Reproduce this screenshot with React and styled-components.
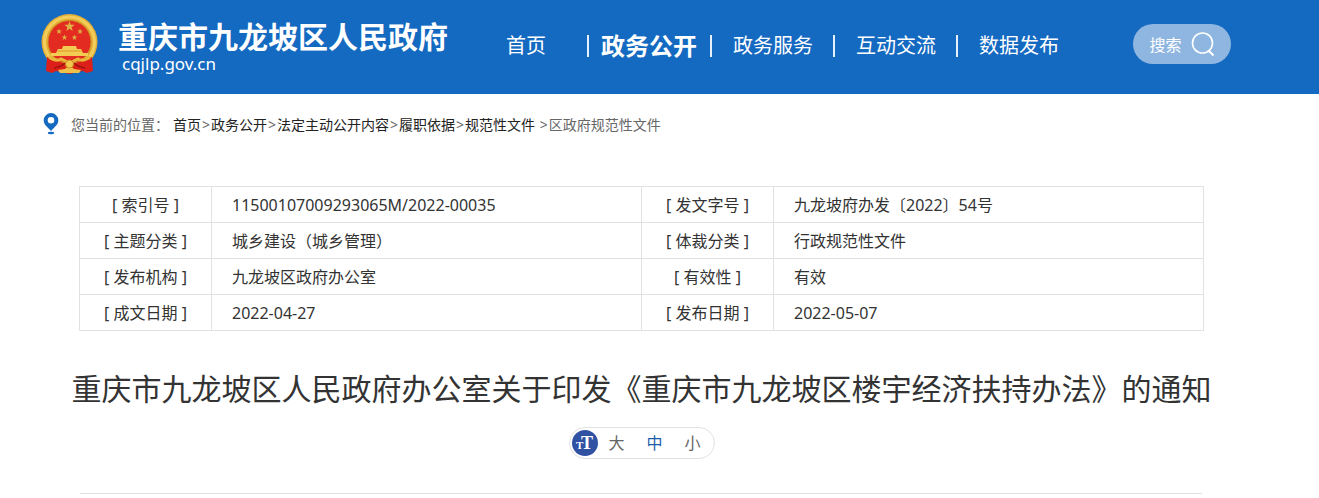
import { useState } from 'react'
import styled, { createGlobalStyle } from 'styled-components'

const GlobalStyle = createGlobalStyle`
  * {
    box-sizing: border-box;
  }

  body {
    margin: 0;
    background: #fff;
    color: #333;
    font-family: "Noto Sans", "Noto Sans CJK SC", sans-serif;
    font-size: 16px;
  }

  button {
    font-family: inherit;
    cursor: pointer;
  }

  a {
    color: inherit;
    text-decoration: none;
  }
`

const Band = styled.div`
  padding-left: 3px;
  padding-right: 40px;
`

const HeaderBand = styled(Band)`
  background: #1469c1;
`

const Container = styled.div`
  max-width: 1200px;
  margin: 0 auto;
`

const HeaderInner = styled(Container)`
  display: flex;
  align-items: flex-start;
  height: 94px;
  color: #fff;
`

const Brand = styled.a`
  display: flex;
  gap: 19px;
  width: 465px;
  padding-top: 13px;
`

const BrandText = styled.div`
  display: flex;
  flex-direction: column;
  padding-top: 2px;
`

const SiteName = styled.span`
  font-size: 30px;
  line-height: 44px;
  font-weight: 700;
  white-space: nowrap;
`

const Domain = styled.span`
  padding-left: 4px;
  font-size: 17px;
  line-height: 10px;
`

const Nav = styled.nav`
  padding-top: 24px;
`

const NavList = styled.ul`
  display: flex;
  align-items: center;
  height: 44px;
  margin: 0;
  padding: 0;
  list-style: none;
`

const NavItem = styled.li`
  display: flex;
  align-items: center;
  height: 22px;
  padding: ${props => (props.$active ? '0 13px 4px 12px' : '0 20px 4px 21px')};
  border-left: ${props => (props.$first ? 'none' : '2px solid #e6f0fa')};
  font-size: ${props => (props.$active ? 24 : 20)}px;
  font-weight: ${props => (props.$active ? 700 : 400)};
  white-space: nowrap;

  ${props => props.$first && 'padding: 0 41px 4px 0;'}
`

const SearchButton = styled.button`
  display: flex;
  align-items: center;
  justify-content: center;
  gap: 9px;
  width: 98px;
  height: 40px;
  margin: 24px 10px 0 auto;
  padding: 0;
  border: none;
  border-radius: 20px;
  background: #8fb6e1;
  color: #fff;
  font-size: 16px;
`

const Breadcrumb = styled.nav`
  display: flex;
  align-items: center;
  height: 60px;
  padding-left: 2px;
  color: #666;
  font-size: 14px;
  white-space: nowrap;

  svg {
    margin-right: 12px;
  }

  a {
    color: #222;
  }
`

const CrumbLabel = styled.span`
  margin-right: 4px;
`

const Arrow = styled.span`
  padding: 0 1px;
`

const Article = styled.article`
  padding: 32px 37px 0 38px;
`

const InfoTable = styled.table`
  width: 100%;
  border-collapse: collapse;
  table-layout: fixed;

  th,
  td {
    height: 36px;
    border: 1px solid #e2e2e2;
    font-weight: 400;
    line-height: 24px;
  }

  th {
    width: 132px;
    padding: 0;
    text-align: center;
  }

  td {
    padding: 0 20px;
  }
`

const Title = styled.h1`
  margin: 36px -20px 0;
  font-size: 30px;
  font-weight: 400;
  line-height: 44px;
  text-align: center;
`

const SizeSwitch = styled.div`
  display: flex;
  align-items: center;
  width: fit-content;
  height: 32px;
  margin: 16px auto 0;
  padding: 0 2px;
  border: 1px solid #e2e2e2;
  border-radius: 16px;
`

const SizeButton = styled.button`
  width: 38px;
  padding: 0;
  border: none;
  background: none;
  color: ${props => (props.$active ? '#1c5da8' : '#666')};
  font-size: 16px;
  line-height: 24px;
`

const Divider = styled.hr`
  height: 1px;
  margin: 34px 2px 0 1px;
  border: none;
  background: #e2e2e2;
`

const star = (cx, cy, r) =>
  Array.from({ length: 10 }, (_, i) => {
    const radius = i % 2 ? r * 0.4 : r
    const angle = (Math.PI / 5) * i - Math.PI / 2
    return `${cx + radius * Math.cos(angle)},${cy + radius * Math.sin(angle)}`
  }).join(' ')

const Emblem = () => (
  <svg width="58" height="62" viewBox="0 0 58 62" aria-hidden="true">
    <circle cx="28.5" cy="29" r="28" fill="#e3ae35" />
    <circle cx="28.5" cy="29" r="25" fill="none" stroke="#f3cd5c" strokeWidth="3" />
    <circle cx="28.5" cy="29" r="21.5" fill="#e32b22" stroke="#c98a20" />
    <g fill="#dfb343">
      <polygon points={star(28.5, 13.5, 5.5)} />
      <polygon points={star(18, 18.5, 3)} />
      <polygon points={star(39, 18.5, 3)} />
      <polygon points={star(23.5, 24.5, 3)} />
      <polygon points={star(33.5, 24.5, 3)} />
    </g>
    <path d="M22 33 H35 L36 36 H40 L42 40 H47 V43 H10 V40 H15 L17 36 H21 Z" fill="#f3ca52" />
    <path d="M17 38 H40" stroke="#d99a2b" />
    <path
      d="M6 44 L13 46 L22 50 L35 50 L44 46 L51 44 L52 58 L46 60 L42 58 L28.5 61 L15 58 L11 60 L5 58 Z"
      fill="#dc2019"
    />
    <path d="M8 44 Q15 49 20 46 L28.5 50 L37 46 Q42 49 49 44" fill="none" stroke="#e9b63c" strokeWidth="3" />
    <path d="M13 55 Q20 54 24 50 M44 55 Q37 54 33 50" fill="none" stroke="#9f150f" strokeWidth="1.5" />
    <path d="M17 57 L24 56 L28.5 52 L33 56 L40 57 L38 60 H19 Z" fill="#f0c14a" />
    <circle cx="28.5" cy="51" r="4" fill="#f3c84e" stroke="#c98a20" />
  </svg>
)

const SearchIcon = () => (
  <svg width="24" height="26" viewBox="0 0 24 26" fill="none" stroke="#fff" strokeWidth="1.6" aria-hidden="true">
    <circle cx="11.5" cy="12" r="10" />
    <path d="M17.5 19.5 L22.5 24.5" strokeWidth="2" />
  </svg>
)

const PinIcon = () => (
  <svg width="16" height="22" viewBox="0 0 16 22" aria-hidden="true">
    <path
      d="M8 0 A7.3 7.3 0 0 0 .7 7.3 C.7 12 4.5 14 8 18 C11.5 14 15.3 12 15.3 7.3 A7.3 7.3 0 0 0 8 0 Z M8 4 A3.3 3.3 0 1 1 8 10.6 A3.3 3.3 0 0 1 8 4 Z"
      fill="#1469c1"
      fillRule="evenodd"
    />
    <ellipse cx="8" cy="20" rx="3.2" ry="1.2" fill="#1469c1" />
  </svg>
)

const FontSizeIcon = () => (
  <svg width="26" height="26" viewBox="0 0 26 26" aria-hidden="true">
    <circle cx="13" cy="13" r="13" fill="#3152a3" />
    <g fill="#fff" fontFamily="Liberation Serif, serif" fontWeight="700">
      <text x="4" y="19" fontSize="11">T</text>
      <text x="9" y="19" fontSize="18">T</text>
    </g>
  </svg>
)

const navItems = ['首页', '政务公开', '政务服务', '互动交流', '数据发布']

const crumbs = ['首页', '政务公开', '法定主动公开内容', '履职依据', '规范性文件']

const rows = [
  ['索引号', '11500107009293065M/2022-00035', '发文字号', '九龙坡府办发〔2022〕54号'],
  ['主题分类', '城乡建设（城乡管理）', '体裁分类', '行政规范性文件'],
  ['发布机构', '九龙坡区政府办公室', '有效性', '有效'],
  ['成文日期', '2022-04-27', '发布日期', '2022-05-07']
]

const sizes = ['大', '中', '小']

const App = () => {
  const [size, setSize] = useState('中')

  return (
    <>
      <GlobalStyle />
      <HeaderBand as="header">
        <HeaderInner>
          <Brand href="#">
            <Emblem />
            <BrandText>
              <SiteName>重庆市九龙坡区人民政府</SiteName>
              <Domain>cqjlp.gov.cn</Domain>
            </BrandText>
          </Brand>
          <Nav>
            <NavList>
              {navItems.map((item, index) => (
                <NavItem key={item} $first={index === 0} $active={item === '政务公开'}>
                  <a href="#">{item}</a>
                </NavItem>
              ))}
            </NavList>
          </Nav>
          <SearchButton type="button">
            搜索
            <SearchIcon />
          </SearchButton>
        </HeaderInner>
      </HeaderBand>

      <Band as="main">
        <Container>
          <Breadcrumb>
            <PinIcon />
            <CrumbLabel>您当前的位置：</CrumbLabel>
            {crumbs.map((crumb, index) => (
              <span key={crumb}>
                <a href="#">{crumb}</a>
                {index === crumbs.length - 1 && ' '}
                <Arrow>&gt;</Arrow>
              </span>
            ))}
            <span>区政府规范性文件</span>
          </Breadcrumb>

          <Article>
            <InfoTable>
              <tbody>
                {rows.map(([label, value, otherLabel, otherValue]) => (
                  <tr key={label}>
                    <th scope="row">[ {label} ]</th>
                    <td>{value}</td>
                    <th scope="row">[ {otherLabel} ]</th>
                    <td>{otherValue}</td>
                  </tr>
                ))}
              </tbody>
            </InfoTable>

            <Title>重庆市九龙坡区人民政府办公室关于印发《重庆市九龙坡区楼宇经济扶持办法》的通知</Title>

            <SizeSwitch role="group" aria-label="字体大小">
              <FontSizeIcon />
              {sizes.map(item => (
                <SizeButton
                  key={item}
                  type="button"
                  $active={item === size}
                  aria-pressed={item === size}
                  onClick={() => setSize(item)}
                >
                  {item}
                </SizeButton>
              ))}
            </SizeSwitch>

            <Divider />
          </Article>
        </Container>
      </Band>
    </>
  )
}

export default App
